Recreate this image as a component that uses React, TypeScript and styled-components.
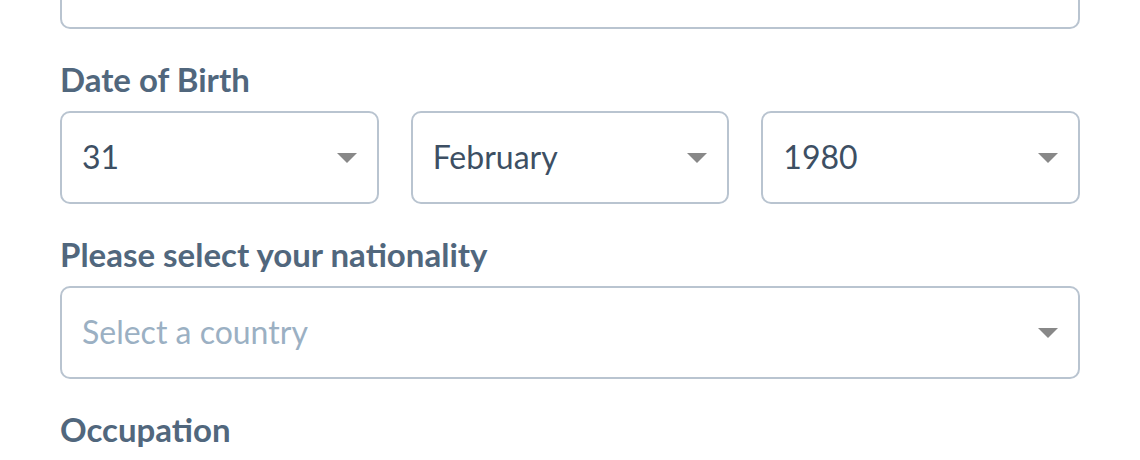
import styled, { createGlobalStyle } from "styled-components";

const GlobalStyle = createGlobalStyle`
  html, body {
    margin: 0;
    padding: 0;
    background: #ffffff;
    overflow: hidden;
  }
  body {
    font-family: Lato, "Open Sans", sans-serif;
  }
`;

const Page = styled.div`
  width: 1140px;
  height: 460px;
  overflow: hidden;
  padding: 0 60px;
  box-sizing: border-box;
`;

const Form = styled.form`
  display: flex;
  flex-direction: column;
  margin-top: -64px;
`;

const Field = styled.div`
  display: flex;
  flex-direction: column;
  & + & {
    margin-top: 30px;
  }
`;

const Label = styled.label`
  font-size: 33px;
  line-height: 40px;
  font-weight: 700;
  color: #51677d;
  margin-bottom: 12px;
`;

const TextInput = styled.input`
  height: 93px;
  box-sizing: border-box;
  border: 2px solid #b9c4d0;
  border-radius: 10px;
  background: #fff;
  font-family: inherit;
  font-size: 32px;
  padding: 0 20px;
  color: #3d4f63;
  outline: none;
`;

const Row = styled.div`
  display: grid;
  grid-template-columns: repeat(3, 1fr);
  column-gap: 32px;
`;

const SelectBox = styled.div`
  height: 93px;
  box-sizing: border-box;
  border: 2px solid #b9c4d0;
  border-radius: 10px;
  background: #fff;
  display: flex;
  align-items: center;
  justify-content: space-between;
  padding: 0 20px;
  cursor: pointer;
`;

const Value = styled.span<{ $placeholder?: boolean }>`
  font-size: 32px;
  line-height: 38px;
  margin-top: -2px;
  color: ${(p) => (p.$placeholder ? "#9bb0c3" : "#3d4f63")};
`;

const Caret = () => (
  <svg width="20" height="10" viewBox="0 0 20 10" aria-hidden="true">
    <path d="M0 0 H20 L10 10 Z" fill="#888888" />
  </svg>
);

function Select({ value, placeholder }: { value?: string; placeholder?: string }) {
  return (
    <SelectBox role="combobox">
      <Value $placeholder={!value}>{value || placeholder}</Value>
      <Caret />
    </SelectBox>
  );
}

export default function App() {
  return (
    <Page>
      <GlobalStyle />
      <Form>
        <Field>
          <TextInput type="text" />
        </Field>
        <Field>
          <Label>Date of Birth</Label>
          <Row>
            <Select value="31" />
            <Select value="February" />
            <Select value="1980" />
          </Row>
        </Field>
        <Field>
          <Label>Please select your nationality</Label>
          <Select placeholder="Select a country" />
        </Field>
        <Field>
          <Label>Occupation</Label>
          <TextInput type="text" />
        </Field>
      </Form>
    </Page>
  );
}
